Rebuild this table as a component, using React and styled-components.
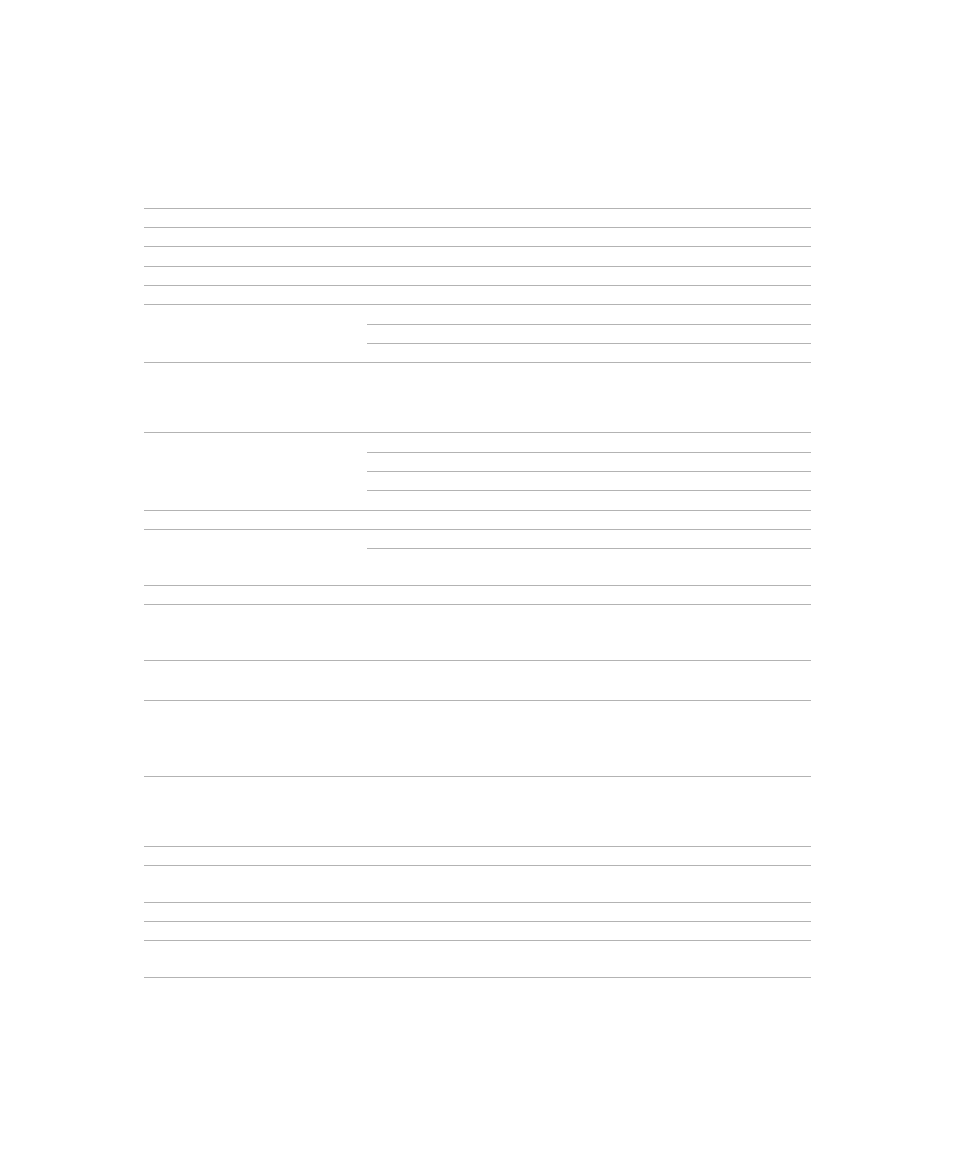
import React from "react";
import styled, { createGlobalStyle } from "styled-components";

const GlobalStyle = createGlobalStyle`
  html, body {
    margin: 0;
    padding: 0;
    background: #ffffff;
    font-family: "Liberation Sans", Arial, sans-serif;
    font-size: 16px;
    color: #222;
  }
  * { box-sizing: border-box; }
`;

const LINE = "#b3b3b3";

const Page = styled.div`
  padding: 208px 0 196px;
`;

const Table = styled.div`
  width: 667px;
  margin: 0 auto;
  display: flex;
  flex-direction: column;
  border-bottom: 1px solid ${LINE};
`;

const Row = styled.div`
  display: grid;
  grid-template-columns: 223px 1fr;
  border-top: 1px solid ${LINE};
  height: ${(p) => p.$h}px;
`;

const Cell = styled.div`
  line-height: 18px;
`;

const SubList = styled.div`
  display: flex;
  flex-direction: column;
`;

const SubRow = styled.div`
  height: ${(p) => p.$h}px;
  border-top: ${(p) => (p.$first ? "none" : `1px solid ${LINE}`)};
`;

// row heights, sub rows where the left cell spans several right cells
const rows = [
  { h: 19 },
  { h: 19 },
  { h: 20 },
  { h: 19 },
  { h: 19 },
  { sub: [20, 19, 19] },
  { h: 70 },
  { sub: [20, 19, 19, 20] },
  { h: 19 },
  { sub: [19, 37] },
  { h: 19 },
  { h: 56 },
  { h: 40 },
  { h: 76 },
  { h: 70 },
  { h: 19 },
  { h: 37 },
  { h: 19 },
  { h: 19 },
  { h: 37 },
];

export default function App() {
  return (
    <Page>
      <GlobalStyle />
      <Table>
        {rows.map((r, i) => {
          if (r.sub) {
            const total = r.sub.reduce((a, b) => a + b, 0);
            return (
              <Row key={i} $h={total}>
                <Cell />
                <SubList>
                  {r.sub.map((h, j) => (
                    <SubRow key={j} $h={j === 0 ? h - 1 : h} $first={j === 0} />
                  ))}
                </SubList>
              </Row>
            );
          }
          return (
            <Row key={i} $h={r.h}>
              <Cell />
              <Cell />
            </Row>
          );
        })}
      </Table>
    </Page>
  );
}
